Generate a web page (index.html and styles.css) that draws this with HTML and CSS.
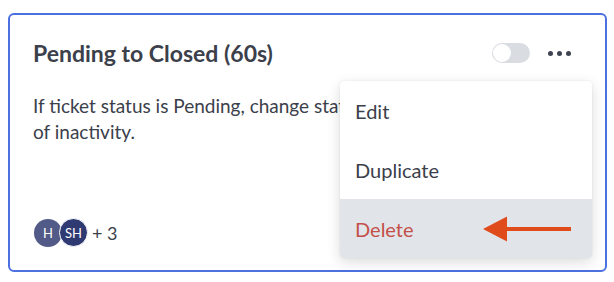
FILE: index.html
```html
<!DOCTYPE html>
<html>
<head>
<meta charset="utf-8">
<link rel="stylesheet" href="styles.css">
</head>
<body>
<div class="card">
  <div class="header">
    <h2 class="title">Pending to Closed (60s)</h2>
    <div class="toggle"><span class="knob"></span></div>
    <div class="dots"><span></span><span></span><span></span></div>
  </div>
  <p class="desc">If ticket status is Pending, change status to Closed after 60s<br>of inactivity.</p>
  <div class="footer">
    <span class="avatar a1">H</span>
    <span class="avatar a2">SH</span>
    <span class="more">+ 3</span>
  </div>
  <div class="menu">
    <div class="item">Edit</div>
    <div class="item">Duplicate</div>
    <div class="item danger">Delete
      <svg class="arrow" width="88" height="26" viewBox="0 0 88 26"><polygon points="0,13 24,0.5 24,25.5" fill="#e04b1c"/><rect x="22" y="11" width="66" height="4" fill="#e04b1c"/></svg>
    </div>
  </div>
</div>
</body>
</html>
```
FILE: styles.css
```css
html, body { margin: 0; padding: 0; background: #fff; }
body { font-family: "Lato", "Noto Sans", sans-serif; color: #3b404b; }
.card {
  position: relative;
  box-sizing: border-box;
  margin: 13px 0 0 8px;
  width: 599px;
  height: 259px;
  border: 2px solid #4c70e0;
  border-radius: 6px;
  padding: 26px 34px 23px 23px;
  display: flex;
  flex-direction: column;
}
.header { display: flex; align-items: center; height: 24px; }
.title { margin: 0; font-size: 23px; line-height: 24px; font-weight: 700; color: #3b404b; }
.toggle {
  margin-left: auto;
  width: 38px; height: 20px;
  border-radius: 10px;
  background: #d9dce1;
  position: relative;
}
.knob {
  position: absolute; left: 1px; top: 1px;
  width: 18px; height: 18px; border-radius: 50%;
  background: #fff;
}
.dots { margin-left: 18px; display: flex; gap: 4px; }
.dots span { width: 5px; height: 5px; border-radius: 50%; background: #3d4350; }
.desc { margin: 28px 0 0; font-size: 19px; line-height: 26px; color: #3b404b; }
.footer { margin-top: auto; display: flex; align-items: center; }
.avatar {
  box-sizing: border-box;
  width: 28px; height: 28px; border-radius: 50%;
  display: flex; align-items: center; justify-content: center;
  color: #fff; font-size: 13px;
}
.a1 { background: #525b87; margin-left: 1px; }
.a2 { background: #2f3a72; margin-left: -3px; border: 1.5px solid #fff; width: 29px; height: 29px; }
.more { margin-left: 4px; font-size: 18px; }
.menu {
  position: absolute; left: 330px; top: 66px;
  width: 252px;
  background: #fff;
  border-radius: 4px;
  box-shadow: 0 4px 14px rgba(0,0,0,0.14), 0 0 2px rgba(0,0,0,0.08);
  overflow: hidden;
}
.item { height: 59px; padding-left: 15px; display: flex; align-items: center; font-size: 20px; color: #3b404b; }
.danger { background: #e1e5e9; color: #c4504a; }
.arrow { margin-left: auto; margin-right: 21px; }
```
